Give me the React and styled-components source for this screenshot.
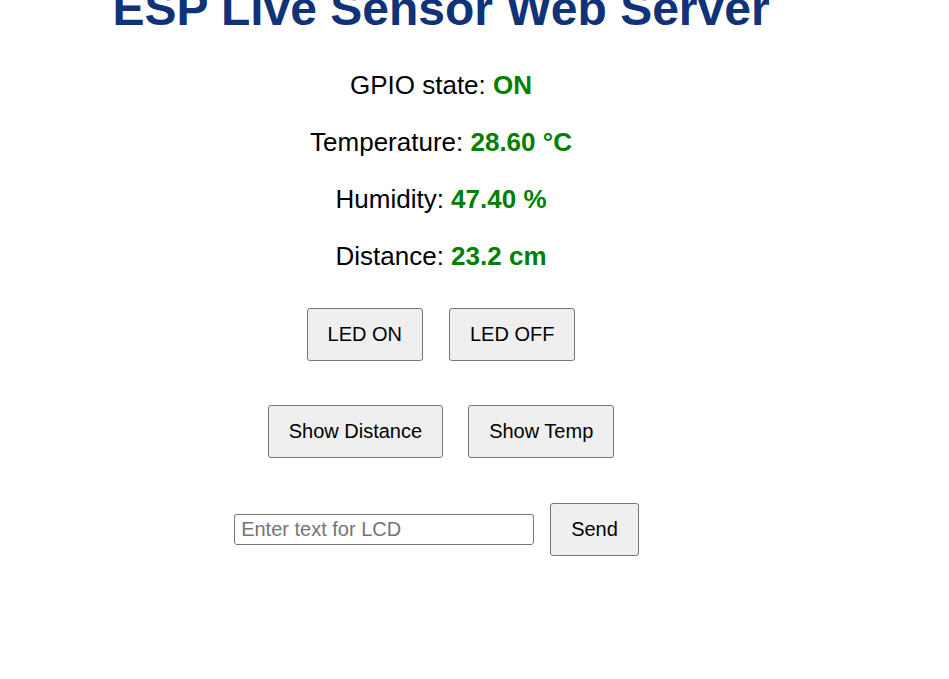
import React from "react";
import styled, { createGlobalStyle } from "styled-components";

const GlobalStyle = createGlobalStyle`
  body {
    margin: 0;
    background: #fff;
    font-family: "Liberation Sans", Arial, sans-serif;
    color: #000;
  }
`;

const Page = styled.div`
  width: 882px;
  text-align: center;
`;

const Title = styled.h1`
  margin: -19px 0 33px;
  font-size: 48px;
  line-height: 56px;
  font-weight: bold;
  color: #0f3376;
`;

const Reading = styled.p`
  margin: 27px 0;
  font-size: 26px;
  line-height: 30px;
`;

const Value = styled.strong`
  color: #008000;
`;

const ButtonRow = styled.div`
  display: flex;
  justify-content: center;
  align-items: center;
  gap: ${(p) => p.$gap || 26}px;
  margin-top: ${(p) => p.$top || 44}px;
  padding-right: ${(p) => p.$shift || 0}px;
`;

const Button = styled.button`
  font-family: "Liberation Sans", Arial, sans-serif;
  font-size: 20px;
  line-height: 23px;
  padding: 14px 20px;
  color: #000;
  background: #efefef;
  border: 1px solid #767676;
  border-radius: 3px;
  cursor: pointer;
`;

const TextInput = styled.input`
  box-sizing: border-box;
  width: 300px;
  height: 31px;
  padding: 3px 6px;
  font-family: "Liberation Sans", Arial, sans-serif;
  font-size: 20px;
  border: 1px solid #767676;
  border-radius: 3px;
  color: #000;

  &::placeholder {
    color: #757575;
  }
`;

export default function App() {
  const readings = [
    { label: "GPIO state", value: "ON" },
    { label: "Temperature", value: "28.60 °C" },
    { label: "Humidity", value: "47.40 %" },
    { label: "Distance", value: "23.2 cm" },
  ];

  return (
    <Page>
      <GlobalStyle />
      <Title>ESP Live Sensor Web Server</Title>
      {readings.map((r) => (
        <Reading key={r.label}>
          {r.label}: <Value>{r.value}</Value>
        </Reading>
      ))}
      <ButtonRow $top={37} $gap={26}>
        <Button>LED ON</Button>
        <Button>LED OFF</Button>
      </ButtonRow>
      <ButtonRow $top={44} $gap={25}>
        <Button>Show Distance</Button>
        <Button>Show Temp</Button>
      </ButtonRow>
      <ButtonRow $top={45} $gap={16} $shift={9}>
        <TextInput type="text" placeholder="Enter text for LCD" />
        <Button>Send</Button>
      </ButtonRow>
    </Page>
  );
}
